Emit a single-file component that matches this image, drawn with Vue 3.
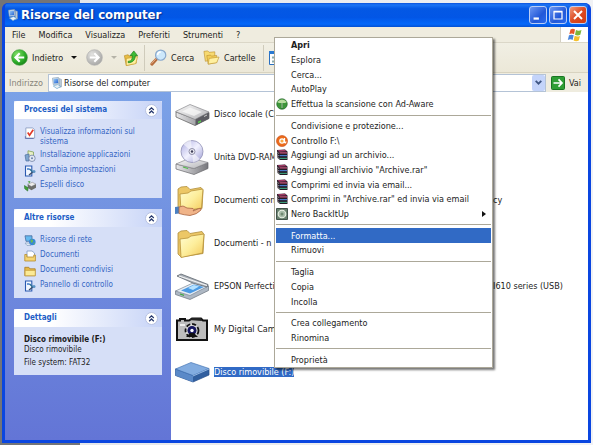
<script setup>
import { ref } from 'vue'

const address = ref('Risorse del computer')
const menus = ['File', 'Modifica', 'Visualizza', 'Preferiti', 'Strumenti', '?']

const tasks = [
  {
    title: 'Processi del sistema',
    links: [
      { icon: 'check', text: 'Visualizza informazioni sul sistema' },
      { icon: 'install', text: 'Installazione applicazioni' },
      { icon: 'panel', text: 'Cambia impostazioni' },
      { icon: 'eject', text: 'Espelli disco' },
    ],
  },
  {
    title: 'Altre risorse',
    links: [
      { icon: 'network', text: 'Risorse di rete' },
      { icon: 'docs', text: 'Documenti' },
      { icon: 'shared', text: 'Documenti condivisi' },
      { icon: 'panel', text: 'Pannello di controllo' },
    ],
  },
]

const files = [
  { icon: 'hdd', name: 'Disco locale (C:)' },
  { icon: 'dvd', name: 'Unità DVD-RAM' },
  { icon: 'sharedfolder', name: 'Documenti condivisi', other: 'cy' },
  { icon: 'folder', name: 'Documenti - n' },
  { icon: 'scanner', name: 'EPSON Perfection', other: 'I610 series (USB)' },
  { icon: 'camera', name: 'My Digital Camera' },
  { icon: 'removable', name: 'Disco rimovibile (F:)', selected: true },
]

const context = [
  { text: 'Apri', strong: true },
  { text: 'Esplora' },
  { text: 'Cerca...' },
  { text: 'AutoPlay' },
  { text: 'Effettua la scansione con Ad-Aware', icon: 'adaware' },
  { sep: true },
  { text: 'Condivisione e protezione...' },
  { text: 'Controllo F:\\', icon: 'avast' },
  { text: 'Aggiungi ad un archivio...', icon: 'rar' },
  { text: 'Aggiungi all\'archivio "Archive.rar"', icon: 'rar' },
  { text: 'Comprimi ed invia via email...', icon: 'rar' },
  { text: 'Comprimi in "Archive.rar" ed invia via email', icon: 'rar' },
  { text: 'Nero BackItUp', icon: 'nero', sub: true },
  { sep: true },
  { text: 'Formatta...', active: true },
  { text: 'Rimuovi' },
  { sep: true },
  { text: 'Taglia' },
  { text: 'Copia' },
  { text: 'Incolla' },
  { sep: true },
  { text: 'Crea collegamento' },
  { text: 'Rinomina' },
  { sep: true },
  { text: 'Proprietà' },
]
</script>

<template>
  <div class="desktop">
    <svg class="defs" aria-hidden="true">
      <defs>
        <linearGradient id="gBlue" x1="0" y1="0" x2="1" y2="1"><stop offset="0" stop-color="#9fd0f8" /><stop offset="1" stop-color="#1f5fd0" /></linearGradient>
        <linearGradient id="gFold" x1="0" y1="0" x2="1" y2="1"><stop offset="0" stop-color="#fffdd2" /><stop offset=".5" stop-color="#fdee9c" /><stop offset="1" stop-color="#f3c95a" /></linearGradient>
        <linearGradient id="gGrey" x1="0" y1="0" x2="1" y2="0"><stop offset="0" stop-color="#e8e8ea" /><stop offset="1" stop-color="#77777c" /></linearGradient>
        <linearGradient id="gTop" x1="0" y1="0" x2="1" y2="1"><stop offset="0" stop-color="#fafafa" /><stop offset="1" stop-color="#b4b4b8" /></linearGradient>
        <radialGradient id="gGreen" cx=".35" cy=".3" r=".8"><stop offset="0" stop-color="#86e06a" /><stop offset=".6" stop-color="#2fae2a" /><stop offset="1" stop-color="#127a14" /></radialGradient>
        <radialGradient id="gOff" cx=".35" cy=".3" r=".8"><stop offset="0" stop-color="#e2e2e0" /><stop offset="1" stop-color="#a3a3a1" /></radialGradient>
        <linearGradient id="gDisc" x1="0" y1="0" x2="1" y2="1"><stop offset="0" stop-color="#a9a9e0" /><stop offset=".5" stop-color="#f2f2ff" /><stop offset="1" stop-color="#9a9ad2" /></linearGradient>
      </defs>
      <symbol id="computer" viewBox="0 0 16 16">
        <path d="M2 1.500 10 .5l1 8.500-8 1z" fill="#d7e4ee" stroke="#8298ac" stroke-width=".8" />
        <path d="M3.200 2.700 9 2l.8 6-6 .7z" fill="url(#gBlue)" />
        <path d="M11 2l3 1.200v10L11 14z" fill="#b9c9d6" stroke="#7d8fa0" stroke-width=".6" />
        <path d="M3 12l6-2 4 2.500-5 3z" fill="#e9f1f6" stroke="#5b9cc8" stroke-width=".8" />
      </symbol>
      <symbol id="back" viewBox="0 0 18 18">
        <circle cx="9" cy="9" r="8.300" fill="url(#gGreen)" stroke="#3d9a38" stroke-width=".7" />
        <path d="M14 9H5M9.200 4.600 4.700 9l4.500 4.400" fill="none" stroke="#fff" stroke-width="2.200" />
      </symbol>
      <symbol id="forward" viewBox="0 0 18 18">
        <circle cx="9" cy="9" r="8.300" fill="url(#gOff)" stroke="#b0b0ae" stroke-width=".7" />
        <path d="M4 9h9M8.800 4.600 13.300 9l-4.500 4.400" fill="none" stroke="#fff" stroke-width="2.200" />
      </symbol>
      <symbol id="up" viewBox="0 0 16 17">
        <path d="M1 6l4-1 1 1.500 7-1.500.5 9L3 16.500z" fill="#e8bd45" stroke="#b98d21" stroke-width=".7" />
        <path d="M3 9l12-2-2 7.500-10 2z" fill="#fff0a0" stroke="#c59c30" stroke-width=".7" />
        <path d="M5 12c3.500 0 4.500-2.500 4.500-6H7l4-5 4 5h-2.500c0 5-3 7.500-7.500 7.500z" fill="#3ebb35" stroke="#187c18" stroke-width=".7" />
      </symbol>
      <symbol id="search" viewBox="0 0 18 18">
        <path d="M2 16l5.500-6" stroke="#b56c3c" stroke-width="3.200" stroke-linecap="round" />
        <path d="M2 15.200l5-5.600" stroke="#e7b08a" stroke-width="1" stroke-linecap="round" />
        <circle cx="11.300" cy="6.500" r="5.400" fill="#cde8fb" stroke="#8aa9cc" stroke-width="1.300" />
        <path d="M8 6.500a3.400 3.400 0 0 1 3.400-3.300" fill="none" stroke="#fff" stroke-width="1.600" />
      </symbol>
      <symbol id="folders" viewBox="0 0 18 16">
        <path d="M1 1.500l4-.5 1.500 1.500 6-.5v8L2.500 12z" fill="#f7da71" stroke="#bf9433" stroke-width=".7" />
        <path d="M4 6l4-.6 1 1.200 5.500-.8v7.500L5.500 15z" fill="#f3cd56" stroke="#bf9433" stroke-width=".7" />
        <path d="M6.500 9l10.500-1.500-2.500 6L5.500 15z" fill="#fff0a0" stroke="#c39b38" stroke-width=".7" />
      </symbol>
      <symbol id="views" viewBox="0 0 16 16">
        <path d="M.5 1.500h15v13H.5z" fill="#fff" stroke="#2a6fc0" /><path d="M0 1h16v3H0z" fill="#2a7ad2" />
        <path d="M3 6.500h3v2H3zm0 4h3v2H3z" fill="#8aa" />
      </symbol>
      <symbol id="go" viewBox="0 0 14 14">
        <rect x=".5" y=".5" width="13" height="13" rx="1" fill="#2f9e35" stroke="#197622" />
        <path d="M2.500 7H11M7.500 3.400 11 7l-3.500 3.600" fill="none" stroke="#fff" stroke-width="1.700" />
      </symbol>
      <symbol id="flag" viewBox="0 0 16 14">
        <path d="M3.500 1.500Q6 .2 8 1.500L7 6.200Q5 5 2.300 6.200z" fill="#e8562a" />
        <path d="M9 2q2.500 1.300 5.500 0L13.300 6.800Q10.500 8 8 6.700z" fill="#7fb53a" />
        <path d="M2 7.300q2.500-1.200 4.700 0L5.600 12Q3.500 10.700.8 12z" fill="#4a86dc" />
        <path d="M7.700 7.800q2.500 1.300 5.300.2L11.800 12.600Q9 13.800 6.600 12.500z" fill="#f5c02c" />
      </symbol>
      <symbol id="check" viewBox="0 0 12 13">
        <path d="M1.500 1h7.500l2 2v9h-9.500z" fill="#fff" stroke="#7f93b8" stroke-width=".8" />
        <path d="M1 10v2.500h9" fill="none" stroke="#5f6fa8" /><path d="M3.500 6l2 3L9.500 3" fill="none" stroke="#e03a2a" stroke-width="1.800" />
      </symbol>
      <symbol id="install" viewBox="0 0 12 12">
        <path d="M4 .8 9.500 2v5L4 6z" fill="#e8efc4" stroke="#83a15b" stroke-width=".8" />
        <path d="M1 5l4-1v7H2z" fill="#7ea6cf" stroke="#4d6f9d" stroke-width=".7" />
        <circle cx="8" cy="8.300" r="3.200" fill="#e2e8f3" stroke="#7181a4" stroke-width=".8" /><circle cx="8" cy="8.300" r="1" fill="#6d83aa" />
      </symbol>
      <symbol id="panel" viewBox="0 0 12 12">
        <path d="M1.500 1h6.300v10H1.500z" fill="#f3f7ff" stroke="#2b5ab0" stroke-width="1.100" />
        <path d="M3 3h2.500v2H3z" fill="#6a98d8" /><path d="M5 10l4.500-3.500" stroke="#3c4f6b" stroke-width="1.500" /><path d="M5.500 4l3.500 3" stroke="#2a6e92" stroke-width="1.500" /><circle cx="10" cy="6.500" r="1.500" fill="#5b93c4" />
      </symbol>
      <symbol id="eject" viewBox="0 0 13 12">
        <path d="M4 4l5-2 4 2-5 2.500z" fill="#ededeb" stroke="#777" stroke-width=".5" /><path d="M4 4v4l4 2.500v-4zM8 6.500v4L13 8V4z" fill="#6c6e6b" />
        <path d="M.5 5.500 4.500 8 4 11.500.8 9z" fill="#44a43b" stroke="#226a22" stroke-width=".6" /><path d="M4 1l3-.5L6 3" fill="#4ba943" />
      </symbol>
      <symbol id="network" viewBox="0 0 12 12">
        <path d="M1 .8h7v5.500H2z" fill="#65b9ef" stroke="#496c9e" stroke-width=".8" /><circle cx="8.300" cy="7" r="3.300" fill="#3786d8" />
        <path d="M6.500 5c2-1 3 0 2.500 2L7 8zM9 9l2-2-.6 2.500z" fill="#66b95b" /><path d="M1 8h4l2 2.500H3z" fill="#dce8f4" stroke="#6c89ad" stroke-width=".5" />
      </symbol>
      <symbol id="docs" viewBox="0 0 12 12">
        <path d="M3 1h5l2.500 2v5H3z" fill="#fff" stroke="#7d98c1" stroke-width=".8" /><path d="M.8 4.500h2V7h7V5h1.600v6H.8z" fill="#f6d573" stroke="#b58a2c" stroke-width=".8" />
      </symbol>
      <symbol id="shared" viewBox="0 0 12 12">
        <path d="M.8 2.300h4l1 1.500h5.400v7H.8z" fill="#e5b847" stroke="#a87c25" stroke-width=".8" /><path d="M1.200 5.500h10v5.200h-10z" fill="#fbea96" stroke="#bc9437" stroke-width=".5" />
      </symbol>
      <symbol id="hdd" viewBox="0 0 36 36">
        <path d="M2 16v5l19 8.500 14-7v-6L21 23z" fill="url(#gGrey)" stroke="#555" stroke-width=".7" />
        <path d="M1.500 15.500 16 8.500 35 16 21 23.500z" fill="url(#gTop)" stroke="#88888c" stroke-width=".7" />
        <path d="M21.500 23.500v6L35 22.500v-6z" fill="#5c5c62" /><path d="M8 15.500l8-4 12 4.500-8 4z" fill="#fdfdfd" opacity=".65" />
        <path d="M24 25.800l3-1.500v1.500l-3 1.500z" fill="#57d84c" /><path d="M30 20.500l3-1.500" stroke="#ccc" />
      </symbol>
      <symbol id="dvd" viewBox="0 0 36 36">
        <path d="M2 25v5l18 5.500 14-6v-6l-14 6z" fill="url(#gGrey)" stroke="#66666a" stroke-width=".7" />
        <path d="M2 25l14-6 18 4.500-14 6z" fill="url(#gTop)" stroke="#88888c" stroke-width=".7" />
        <circle cx="18" cy="12.500" r="11" fill="url(#gDisc)" stroke="#9292b5" stroke-width=".8" />
        <path d="M18 12.500 9 5q3-4 8-4zM18 12.500l8 7.500q-3 3-7 3.500z" fill="#fff" opacity=".55" />
        <circle cx="18" cy="12.500" r="3" fill="#eeeef5" stroke="#8e8ea8" /><circle cx="18" cy="12.500" r="1.200" fill="#3d3d55" />
        <path d="M9 28l5 1.500" stroke="#4fbd48" stroke-width="1.300" />
      </symbol>
      <symbol id="folder" viewBox="0 0 36 36">
        <path d="M4 8l3-2 6-.5 3 3 12-2 2 3-1 19L7 32 4 29z" fill="#ecc766" stroke="#b08e3c" stroke-width=".8" />
        <path d="M6 14l8-1 3-2 13-2-1.500 19L7 32.500z" fill="url(#gFold)" stroke="#b8923a" stroke-width=".8" />
      </symbol>
      <symbol id="sharedfolder" viewBox="0 0 36 36">
        <path d="M4 7l3-2 6-.5 3 3 11-2 2 3-1 18L7 29 4 26z" fill="#ecc766" stroke="#b08e3c" stroke-width=".8" />
        <path d="M6 12l8-1 3-2 12-2-1.500 19L7 29.500z" fill="url(#gFold)" stroke="#b8923a" stroke-width=".8" />
        <path d="M1 25l4-.5v7l-4 .5z" fill="#4a80c2" />
        <path d="M5 25q4-2.500 8 1l6 .5q2 1 0 2.500l6-2.500q3-.5 2 1.500-4 4.500-11 5.500-6-.5-11-2z" fill="#f0b489" stroke="#a86442" stroke-width=".8" />
      </symbol>
      <symbol id="scanner" viewBox="0 0 36 36">
        <path d="M1.500 23v3.500L16 31.500l18.500-9V18z" fill="#aeb8c4" stroke="#69727d" stroke-width=".7" />
        <path d="M1.500 23 20 14.500 34.500 18 16 27.500z" fill="#e6edf4" stroke="#7b8794" stroke-width=".7" />
        <path d="M7 22.500 20 16.500l10 2.500-14 6.500z" fill="#4b9ae4" /><path d="M14 20l6-3 5 1.500-6 3.500z" fill="#b5e1ff" />
        <path d="M3 8l4-2 27 10.500-1 2.500L20 15.500z" fill="#a9b0b8" stroke="#5d656d" stroke-width=".8" /><path d="M5 8l28 9.500" stroke="#f4f4f4" stroke-width="1.200" />
        <path d="M6 26l4 1.300" stroke="#40a93f" stroke-width="1.300" />
      </symbol>
      <symbol id="camera" viewBox="0 0 36 36">
        <path d="M3 9.500h3V8h5v1.500h4l3-2h9l2 2h4V29H3z" fill="#bdbdbd" stroke="#111" stroke-width="2" />
        <path d="M15 9l3-2h9l1 3z" fill="#222" /><circle cx="18" cy="19.500" r="6.500" fill="#ddd" stroke="#111" stroke-width="1.800" stroke-dasharray="4 2" />
        <circle cx="18" cy="19.500" r="4.500" fill="#15155e" /><circle cx="18" cy="19.500" r="1.700" fill="#fff" /><path d="M12 26l4-4h4l4 4z" fill="#111" /><path d="M6 13h5v2H6z" fill="#eee" />
      </symbol>
      <symbol id="removable" viewBox="0 0 36 36">
        <path d="M1.500 15v6.500L19 28l16-7v-6.500z" fill="#315f9f" stroke="#274f89" stroke-width=".7" />
        <path d="M1.500 15 17 8.500l18 6L19 21.500z" fill="#82ace0" stroke="#4777b6" stroke-width=".7" />
        <path d="M1.500 15.500 19 22v6L1.500 21.500z" fill="#5a89c8" /><path d="M19 22l16-7" stroke="#a9c9ef" stroke-width=".8" />
      </symbol>
      <symbol id="adaware" viewBox="0 0 12 12">
        <circle cx="6" cy="6" r="5.300" fill="#3d9639" stroke="#225f27" stroke-width=".6" /><path d="M1 4q5-5 10 0L9 5H7v5H5V5H3z" fill="#b9dea0" /><path d="M6 11V5" stroke="#286b3a" />
      </symbol>
      <symbol id="avast" viewBox="0 0 12 12">
        <circle cx="6" cy="6" r="5.500" fill="#ec6c1b" stroke="#c54410" stroke-width=".6" /><circle cx="6" cy="6" r="2.200" fill="#f9a943" stroke="#fff" stroke-width="1.200" /><path d="M8.500 3v4.500q1.200 1 1.500-1" fill="none" stroke="#fff" stroke-width="1.200" />
      </symbol>
      <symbol id="rar" viewBox="0 0 12 12">
        <path d="M1 1l8-.5 2.500 2v8.500H4L1.500 9z" fill="#221a26" />
        <path d="M1.500 1.300 9 .8l1.500 1.400-7.500.6z" fill="#a23c66" />
        <path d="M3.500 3.300h7.500v1.200H3.500z" fill="#d0567e" /><path d="M3.500 6h7.500v1.200H3.500z" fill="#4a78c8" /><path d="M3.500 8.800h7.500V10H3.500z" fill="#3d9a78" />
        <path d="M1.500 3.500 3 4.500M1.500 6l1.500 1M1.800 8.500l1.500 1" stroke="#c9c2bd" stroke-width=".7" />
      </symbol>
      <symbol id="nero" viewBox="0 0 12 12">
        <path d="M.5.500h11v11H.5z" fill="#67806d" stroke="#43544b" /><circle cx="6" cy="6" r="3.800" fill="#a8bda9" stroke="#eaf0e5" stroke-width="1.100" /><circle cx="6" cy="6" r="1.500" fill="#6f8872" />
      </symbol>
    </svg>

    <main class="window">
      <header class="titlebar">
        <svg class="i12" aria-hidden="true"><use href="#computer" /></svg>
        <h1>Risorse del computer</h1>
        <div class="controls">
          <button aria-label="Riduci a icona"><svg viewBox="0 0 18 18"><path d="M4 13h6" stroke="#fff" stroke-width="2.500" /></svg></button>
          <button aria-label="Ingrandisci"><svg viewBox="0 0 18 18"><path d="M4.500 5.500h9v8h-9zM4 5h10" fill="none" stroke="#fff" stroke-width="1.400" /></svg></button>
          <button class="close" aria-label="Chiudi"><svg viewBox="0 0 18 18"><path d="M4.500 4.500l9 9M13.500 4.500l-9 9" stroke="#fff" stroke-width="2.200" /></svg></button>
        </div>
      </header>

      <nav class="menubar">
        <button v-for="m in menus" :key="m">{{ m }}</button>
        <span class="throbber"><svg aria-hidden="true"><use href="#flag" /></svg></span>
      </nav>

      <div class="toolbar">
        <button class="b-back"><svg class="i18"><use href="#back" /></svg>Indietro<i class="caret"></i></button>
        <button class="b-forward" aria-label="Avanti" disabled><svg class="i18"><use href="#forward" /></svg><i class="caret off"></i></button>
        <button class="b-up" aria-label="Cartella superiore"><svg class="i16"><use href="#up" /></svg></button>
        <span class="rule"></span>
        <button class="b-search"><svg class="i18"><use href="#search" /></svg>Cerca</button>
        <button class="b-folders"><svg class="i18"><use href="#folders" /></svg>Cartelle</button>
        <span class="rule"></span>
        <button aria-label="Visualizza"><svg class="i16"><use href="#views" /></svg></button>
      </div>

      <form class="address" @submit.prevent>
        <label for="addr">Indirizzo</label>
        <div class="combo">
          <svg class="i12"><use href="#computer" /></svg>
          <input id="addr" v-model="address" type="text" />
          <button type="button" aria-label="Apri elenco"><svg viewBox="0 0 8 8"><path d="M1.500 2.500 4 5l2.500-2.500" fill="none" stroke="#3f5684" stroke-width="1.600" /></svg></button>
        </div>
        <button class="go"><svg class="i14"><use href="#go" /></svg>Vai</button>
      </form>

      <div class="content">
        <aside>
          <section v-for="t in tasks" :key="t.title" class="box">
            <h2>{{ t.title }}<button :aria-label="'Comprimi ' + t.title"><svg viewBox="0 0 12 12"><path d="M3.500 5.500 6 3l2.500 2.500M3.500 9 6 6.500 8.500 9" fill="none" stroke="#26386e" stroke-width="1.300" /></svg></button></h2>
            <ul>
              <li v-for="l in t.links" :key="l.text"><a href="#"><svg class="i12"><use :href="'#' + l.icon" /></svg><span>{{ l.text }}</span></a></li>
            </ul>
          </section>
          <section class="box">
            <h2>Dettagli<button aria-label="Comprimi Dettagli"><svg viewBox="0 0 12 12"><path d="M3.500 5.500 6 3l2.500 2.500M3.500 9 6 6.500 8.500 9" fill="none" stroke="#26386e" stroke-width="1.300" /></svg></button></h2>
            <div class="details">
              <strong>Disco rimovibile (F:)</strong>
              <p>Disco rimovibile</p>
              <p class="fs">File system: FAT32</p>
            </div>
          </section>
        </aside>
        <ul class="files">
          <li v-for="f in files" :key="f.name">
            <svg class="i36"><use :href="'#' + f.icon" /></svg>
            <span class="name"><span :class="{ selected: f.selected }">{{ f.name }}</span></span>
            <span v-if="f.other">{{ f.other }}</span>
          </li>
        </ul>
      </div>

      <div class="context" role="menu">
        <template v-for="(c, n) in context" :key="n">
          <hr v-if="c.sep" />
          <button v-else role="menuitem" :class="{ active: c.active, strong: c.strong }">
            <span class="slot"><svg v-if="c.icon" class="i12"><use :href="'#' + c.icon" /></svg></span>
            <span class="label">{{ c.text }}</span>
            <i v-if="c.sub" class="sub"></i>
          </button>
        </template>
      </div>
    </main>
  </div>
</template>

<style>
body { background: #8b8d92; }
</style>

<style scoped>
* { box-sizing: border-box; margin: 0; padding: 0; }
.desktop {
  display: flex;
  min-height: 100vh;
  padding: 3px 2px 2px;
  overflow: hidden;
  background: linear-gradient(90deg, #737478 80px, #e4e6ea 80px, #f1f2f5 100%);
  font: 9px/12px "DejaVu Sans Condensed", "DejaVu Sans", sans-serif;
  color: #1c1c1c;
}
.defs { position: absolute; width: 0; height: 0; }
button { border: 0; background: none; font: inherit; color: inherit; display: flex; align-items: center; white-space: nowrap; }
svg { display: block; flex: none; }
ul { list-style: none; }
.i12 { width: 12px; height: 12px; }
.i14 { width: 14px; height: 14px; }
.i16 { width: 16px; height: 16px; }
.i18 { width: 17px; height: 17px; }
.i36 { width: 36px; height: 36px; }
.window {
  position: relative;
  flex: 1;
  display: flex;
  flex-direction: column;
  border: solid #0a46e0;
  border-width: 0 3px 3px;
  border-radius: 6px 6px 0 0;
  background: #0a46e0;
}
.titlebar {
  display: flex;
  align-items: center;
  height: 24px;
  padding: 0 1px 0 2px;
  border-radius: 4px 4px 0 0;
  background: linear-gradient(#0b52dc, #1b74f5 8%, #0458e4 24%, #0256e6 60%, #0468fa 88%, #0450d2);
}
h1 { margin-left: 2px; flex: 1; font: bold 13px/20px "DejaVu Sans Condensed", "DejaVu Sans", sans-serif; color: #fff; text-shadow: 1px 1px 1px #0a2a88; white-space: nowrap; }
.controls { display: flex; gap: 2px; }
.controls button { width: 18px; height: 18px; border: 1px solid #b9cdf6; border-radius: 3px; background: linear-gradient(135deg, #6c97f2, #2258d8 60%, #2b6bee); }
.controls svg { width: 16px; height: 16px; }
.controls .close { background: linear-gradient(135deg, #f09a7c, #dc4a22 50%, #d03c14); }
.menubar { display: flex; gap: 13px; height: 16px; padding-left: 7px; background: #efecdf; border-bottom: 1px solid #dbd7c8; }
.throbber { width: 28px; margin-left: auto; display: flex; justify-content: center; align-items: center; background: #fff; border-left: 1px solid #d4d0c2; }
.throbber svg { width: 16px; height: 14px; }
.toolbar { display: flex; align-items: center; height: 30px; padding-left: 6px; background: linear-gradient(#f1efe4, #ece8d8); border-bottom: 1px solid #d8d3c0; }
.toolbar button { gap: 4px; }
.b-back { width: 75px; }
.b-forward { width: 37px; }
.b-up { width: 21px; }
.b-search { width: 53px; padding-left: 5px; }
.b-folders { width: 65px; padding-left: 5px; }
.rule { width: 1px; height: 26px; background: #cfcbbb; }
.rule + button:last-child { padding-left: 5px; }
.caret { margin-left: 4px; border: solid transparent; border-width: 3px 3px 0; border-top-color: #111; }
.caret.off { border-top-color: #b5b3a8; }
.address { display: flex; align-items: center; height: 19px; background: #efecdf; }
.address label { width: 43px; padding-left: 4px; color: #87857a; white-space: nowrap; }
.combo { flex: 1; display: flex; align-items: center; height: 18px; padding-left: 2px; border: 1px solid #b4c3d6; background: #fff; }
.combo input { flex: 1; min-width: 0; border: 0; outline: 0; margin-left: 1px; font: inherit; color: inherit; background: transparent; }
.combo button { width: 13px; height: 16px; justify-content: center; border-radius: 2px; background: #c4d4fa; }
.combo button svg { width: 9px; height: 9px; }
.go { width: 42px; padding-left: 5px; gap: 4px; }
.content { flex: 1; display: flex; min-height: 0; background: #fff; }
aside { flex: none; width: 166px; padding: 9px 9px 0; display: flex; flex-direction: column; gap: 11px; background: linear-gradient(#7ba2e7, #6375d6); }
.box { background: #d6dff7; }
h2 { display: flex; align-items: center; justify-content: space-between; height: 18px; padding: 0 4px 0 10px; border-radius: 3px 3px 0 0; background: linear-gradient(90deg, #fff 25%, #c6d3f7); font-size: 8px; color: #215dc6; }
h2 button { width: 13px; height: 13px; border-radius: 50%; background: #fff; border: 1px solid #b7c2e2; }
h2 svg { width: 11px; height: 11px; }
.box ul { padding: 8px 10px 6px; display: flex; flex-direction: column; gap: 3px; }
.box a { display: flex; gap: 4px; color: #3566c4; text-decoration: none; line-height: 10px; min-height: 12px; font-size: 8px; }
.details { padding: 8px 10px 7px; line-height: 10px; font-size: 8px; }
.details .fs { margin-top: 3px; }
.files { flex: 1; min-width: 0; padding-left: 3px; }
.files li { display: flex; align-items: center; height: 43px; gap: 4px; white-space: nowrap; }
.name { flex: none; width: 275px; }
.selected { background: #316ac5; color: #fff; }
.context {
  position: absolute;
  left: 269px;
  top: 34px;
  width: 219px;
  height: 331px;
  display: flex;
  flex-direction: column;
  padding: 0 1px;
  border: 1px solid #aca899;
  background: #fff;
  box-shadow: 2px 2px 2px #0008;
}
.context button { flex: 1; min-height: 0; }
.slot { width: 15px; }
.label { flex: 1; text-align: left; }
.context hr { height: 7px; border: 0; background: linear-gradient(#aca899, #aca899) center / 100% 1px no-repeat; }
.active { background: #316ac5; color: #fff; }
.strong { font-weight: bold; }
.sub { margin-right: 5px; border: solid transparent; border-width: 3px 0 3px 4px; border-left-color: #111; }
</style>
